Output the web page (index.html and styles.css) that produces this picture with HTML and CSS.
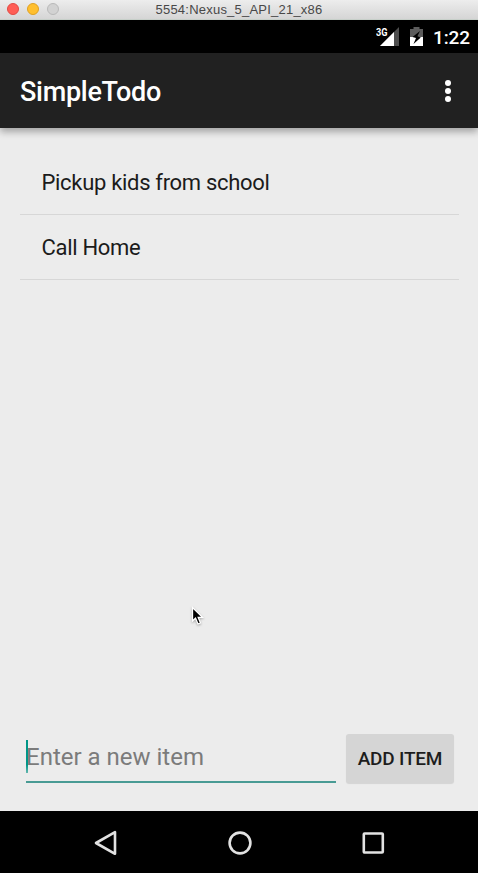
FILE: index.html
```html
<!DOCTYPE html>
<html lang="en">
<head>
<meta charset="utf-8">
<title>SimpleTodo</title>
<link rel="stylesheet" href="styles.css">
</head>
<body>
<div class="window">
  <header class="titlebar">
    <div class="lights"><i class="light close"></i><i class="light minimize"></i><i class="light zoom"></i></div>
    <span class="window-title">5554:Nexus_5_API_21_x86</span>
  </header>
  <div class="statusbar">
    <svg class="signal" width="24" height="20" viewBox="0 0 24 20">
      <path d="M23 0V19H4z" fill="#4d4d4d"/><path d="M18 5V19H4z" fill="#fff"/>
      <text class="network" x="0" y="9" textLength="11.5" lengthAdjust="spacingAndGlyphs">3G</text>
    </svg>
    <svg class="battery" width="13" height="19" viewBox="0 0 13 19">
      <path d="M0 2H3.5V0H9.5V2H13V10H0z" fill="#5c5c5c"/><path d="M0 10H13V19H0z" fill="#fff"/>
      <path d="M10 4L2.5 10L6 11L3.5 17L10.8 10.4L7.4 9.2z" fill="#000"/>
    </svg>
    <span class="clock">1:22</span>
  </div>
  <div class="appbar">
    <h1 class="app-title">SimpleTodo</h1>
    <svg class="overflow" width="6" height="22" viewBox="0 0 6 22" fill="#fff"><circle cx="3" cy="3" r="3"/><circle cx="3" cy="11" r="3"/><circle cx="3" cy="19" r="3"/></svg>
  </div>
  <main class="content">
    <ul class="todos">
      <li class="todo">Pickup kids from school</li>
      <li class="todo">Call Home</li>
    </ul>
    <div class="entry">
      <div class="field"><i class="caret"></i><span class="hint">Enter a new item</span></div>
      <button class="add">ADD ITEM</button>
    </div>
    <svg class="pointer" width="14" height="21" viewBox="0 0 14 21">
      <path d="M1.5 1.5V15L4.5 12.2L7 18L9.5 17L7.2 11.4H11.5z" fill="#000" stroke="#fff" stroke-width="1.3"/>
    </svg>
  </main>
  <nav class="navbar">
    <svg width="24" height="26" viewBox="0 0 24 26"><path d="M2 13L21 2.2V23.8z"/></svg>
    <svg width="24" height="26" viewBox="0 0 24 26"><circle cx="12" cy="13" r="10.4"/></svg>
    <svg width="24" height="26" viewBox="0 0 24 26"><rect x="2.8" y="3.5" width="19" height="19" rx=".8"/></svg>
  </nav>
</div>
</body>
</html>
```
FILE: styles.css
```css
* { box-sizing: border-box; }
body { margin: 0; font-family: Roboto, sans-serif; background: #ececec; }
.window { width: 478px; height: 873px; display: flex; flex-direction: column; overflow: hidden; }
.titlebar { height: 20px; flex: none; display: grid; grid-template-columns: 80px 1fr 80px; background: linear-gradient(#ededed, #d5d5d5); border-bottom: 1px solid #c7cfc9; }
.lights { display: flex; gap: 8px; padding: 3px 0 0 7px; }
.light { width: 12px; height: 12px; border-radius: 50%; border: 1px solid; }
.close { background: #ff5d55; border-color: #e24a43; }
.minimize { background: #ffbf2e; border-color: #dfa123; }
.zoom { background: #d2d2d2; border-color: #b9b9b9; }
.window-title { font: 13px/19px "Liberation Sans", sans-serif; letter-spacing: .22px; color: #484848; text-align: center; white-space: nowrap; }
.statusbar { height: 33px; flex: none; background: #000; display: flex; align-items: flex-start; padding: 7px 8px 0 0; justify-content: flex-end; color: #fff; }
.network { font: 700 11px Roboto, sans-serif; fill: #fff; }
.battery { margin-left: 10px; }
.clock { font-size: 19px; font-weight: 500; line-height: 22px; letter-spacing: -.1px; margin-left: 10px; }
.appbar { height: 75px; flex: none; background: #212121; display: flex; align-items: center; justify-content: space-between; padding: 0 27px 0 20px; box-shadow: 0 4px 7px rgba(0,0,0,.3); z-index: 1; }
.app-title { margin: 2px 0 0; font-size: 27px; font-weight: 500; line-height: 32px; letter-spacing: -.28px; color: #fff; }
.content { flex: 1; display: flex; flex-direction: column; justify-content: space-between; background: #ececec; padding: 22px 19px 28px 20px; position: relative; }
.todos { list-style: none; margin: 0; padding: 0; }
.todo { height: 65px; border-bottom: 1px solid #d7d7d7; padding-left: 21.5px; font-size: 22px; line-height: 65px; letter-spacing: -.31px; color: #1b1b1b; }
.entry { display: flex; align-items: flex-end; padding: 0 5px 0 6px; gap: 10px; }
.field { width: 310px; height: 50px; display: flex; align-items: flex-start; border-bottom: 2px solid #499b94; position: relative; }
.caret { position: absolute; left: 0; top: 6.5px; width: 2px; height: 33px; background: linear-gradient(#009688 75%, #65b7af); }
.hint { font-size: 24px; line-height: 28px; margin-top: 10px; color: #7b7b7b; }
.add { flex: 1; height: 49px; border: 0; border-radius: 3px; background: #d5d5d5; box-shadow: 0 1px 1px rgba(0,0,0,.1); padding: 0; font: 500 19px/49px Roboto, sans-serif; letter-spacing: -.2px; color: #1d1d1d; white-space: nowrap; }
.pointer { position: absolute; left: 191px; top: 478px; filter: drop-shadow(0 1px 1px rgba(0,0,0,.3)); }
.navbar { height: 62px; flex: none; background: #000; display: flex; align-items: center; justify-content: space-between; padding: 2px 93px 0 94px; }
.navbar svg { fill: none; stroke: #e2e2e2; stroke-width: 2.6; stroke-linejoin: round; }
```
